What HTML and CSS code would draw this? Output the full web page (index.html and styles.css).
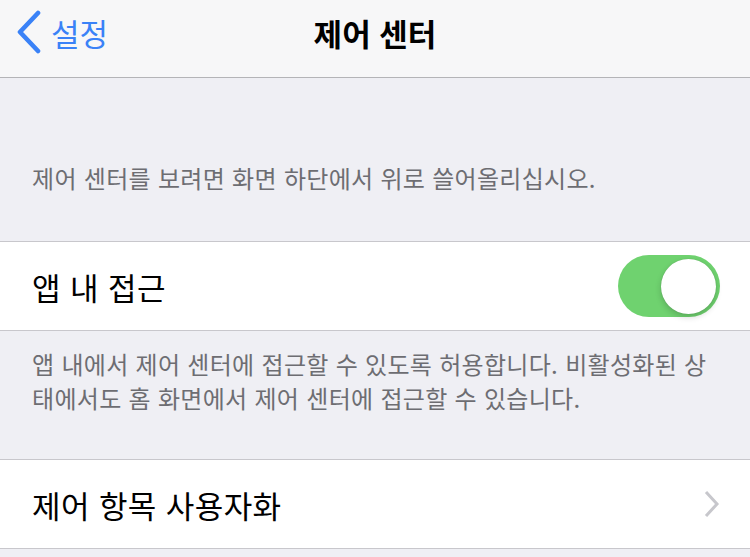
FILE: index.html
```html
<!DOCTYPE html>
<html lang="ko">
<head>
    <meta charset="UTF-8">
    <meta name="viewport" content="width=device-width, initial-scale=1.0">
    <title>제어 센터</title>
    <link rel="stylesheet" href="styles.css">
</head>
<body>
    <header class="barre-nav">
        <a class="retour" href="#">
            <svg class="retour-icone" width="28" height="44" viewBox="0 0 28 44">
                <polyline points="23,3 5,22 23,41" fill="none" stroke="#3a82f7" stroke-width="4.6" stroke-linecap="round" stroke-linejoin="round"/>
            </svg>
            <span>설정</span>
        </a>
        <h1 class="titre">제어 센터</h1>
        <div></div>
    </header>

    <main>
        <p class="section-entete">제어 센터를 보려면 화면 하단에서 위로 쓸어올리십시오.</p>

        <div class="groupe">
            <div class="cellule">
                <span>앱 내 접근</span>
                <div class="interrupteur actif">
                    <div class="pastille"></div>
                </div>
            </div>
        </div>

        <p class="section-pied">앱 내에서 제어 센터에 접근할 수 있도록 허용합니다. 비활성화된 상태에서도 홈 화면에서 제어 센터에 접근할 수 있습니다.</p>

        <div class="groupe">
            <a class="cellule" href="#">
                <span>제어 항목 사용자화</span>
                <svg class="chevron" width="18" height="28" viewBox="0 0 18 28">
                    <polyline points="3,2 14,14 3,26" fill="none" stroke="#c7c7cc" stroke-width="3" stroke-linejoin="miter"/>
                </svg>
            </a>
        </div>
    </main>
</body>
</html>
```

FILE: styles.css
```css
/* Réglages iOS */
body {
    background-color: #efeff4;
    color: #000000;
    font-family: "Noto Sans CJK KR", "Noto Sans", sans-serif;
    margin: 0;
    padding: 0;
}

.barre-nav {
    background-color: #f7f7f8;
    border-bottom: 1px solid #b4b4b7;
    height: 64px;
    padding-bottom: 13px;
    display: grid;
    grid-template-columns: 1fr auto 1fr;
    align-items: center;
}

.retour {
    display: flex;
    align-items: center;
    color: #3a82f7;
    text-decoration: none;
    font-size: 31px;
    padding-left: 15px;
}

.retour-icone {
    margin-right: 8px;
}

.titre {
    margin: 0;
    font-size: 31px;
    font-weight: 700;
}

.section-entete,
.section-pied {
    margin: 0;
    color: #6d6d72;
    font-size: 24px;
    letter-spacing: 0.3px;
    line-height: 34px;
}

.section-entete {
    padding: 83px 32px 46px;
}

.section-pied {
    padding: 16px 32px 44px;
}

.groupe {
    background-color: #ffffff;
    border-top: 1px solid #c8c7cc;
    border-bottom: 1px solid #c8c7cc;
}

.cellule {
    height: 88px;
    display: flex;
    align-items: center;
    justify-content: space-between;
    padding: 0 30px 0 32px;
    font-size: 31px;
    letter-spacing: 0.4px;
    color: #000000;
    text-decoration: none;
}

.interrupteur {
    width: 102px;
    height: 62px;
    border-radius: 31px;
    background-color: #e5e5ea;
    display: flex;
    align-items: center;
    padding: 0 4px;
    box-sizing: border-box;
}

.interrupteur.actif {
    background-color: #6fd26f;
    justify-content: flex-end;
}

.pastille {
    width: 55px;
    height: 55px;
    border-radius: 50%;
    background-color: #ffffff;
    box-shadow: 0 3px 6px rgba(0, 0, 0, 0.18), 0 0 1px rgba(0, 0, 0, 0.2);
}

.chevron {
    margin-right: -1px;
}
```
